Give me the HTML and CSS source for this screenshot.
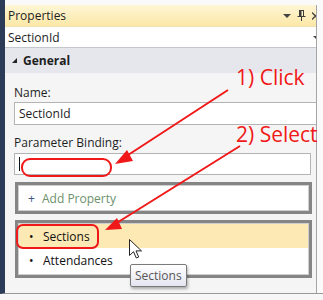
FILE: index.html
```html
<!DOCTYPE html>
<html lang="en">
<head>
  <meta charset="UTF-8" />
  <title>Properties</title>
  <link rel="stylesheet" href="styles.css">
</head>
<body>
  <div class="shot">
    <div class="panel">
      <div class="title">
        <span>Properties</span>
        <span class="title-icons">
          <span class="drop"></span>
          <svg class="pin" width="9" height="11" viewBox="0 0 9 11"><path d="M2 0.5h5M2.5 0.5v6M6.5 0.5v6M0.5 6.5h8M4.5 6.5v4.5" stroke="#3c3c3c" fill="none"/><rect x="2.5" y="1" width="2" height="5.5" fill="#3c3c3c"/></svg>
          <svg class="close" width="4" height="8" viewBox="0 0 4 8"><path d="M0 0.5l7 7M0 7.5l7-7" stroke="#444" stroke-width="1.3"/></svg>
        </span>
      </div>
      <div class="combo">SectionId<span class="combo-arrow"></span></div>
      <div class="group"><span class="tri"></span>General</div>
      <div class="body">
        <div class="label">Name:</div>
        <div class="field wide">SectionId</div>
        <div class="label">Parameter Binding:</div>
        <div class="field"><span class="caret"></span></div>
        <div class="box add"><span class="plus">+</span>Add Property</div>
        <div class="box list">
          <div class="item active"><span class="dot">•</span>Sections</div>
          <div class="item"><span class="dot">•</span>Attendances</div>
        </div>
      </div>
    </div>
    <div class="tip">Sections</div>
    <svg class="pointer" width="14" height="21" viewBox="0 0 14 21"><path d="M0.5 0.5v16l4-3.8 2.8 6.3 2.4-1-2.7-6.1h5.5z" fill="#fff" stroke="#222" stroke-linejoin="round"/></svg>
    <svg class="notes" width="323" height="300" viewBox="0 0 323 300">
      <g fill="none" stroke="#f01818" stroke-width="2">
        <rect x="22" y="159" width="89" height="17" rx="8"/>
        <rect x="17" y="225" width="81" height="23" rx="6"/>
        <line x1="228" y1="90" x2="125" y2="157"/>
        <line x1="240" y1="146" x2="115" y2="224"/>
      </g>
      <g fill="#f01818">
        <polygon points="115,164 127,150 133,161"/>
        <polygon points="105,230 117,218 122,229"/>
      </g>
      <text x="236" y="85" class="note">1) Click</text>
      <text x="236" y="142" class="note">2) Select</text>
    </svg>
  </div>
</body>
</html>
```

FILE: styles.css
```css
* { margin: 0; padding: 0; box-sizing: border-box; }
body {
  font-family: 'Open Sans', 'Noto Sans', sans-serif;
  font-size: 12px;
  color: #1e1e1e;
  background: #f7f7f7;
  width: 323px;
  height: 300px;
  overflow: hidden;
}

.shot {
  position: relative;
  width: 323px;
  height: 294px;
  padding-top: 5px;
  border-left: 5px solid #2c3b58;
  border-bottom: 1px solid #9a9a9a;
  background: #fafafa;
}

/* Properties panel */
.panel {
  width: 312px;
  height: 288px;
  overflow: hidden;
  border-right: 1px solid #a5a5a5;
  display: flex;
  flex-direction: column;
}
.title {
  height: 22px;
  display: flex;
  align-items: center;
  justify-content: space-between;
  padding-left: 3px;
  background: linear-gradient(#fef6d6, #fce8a6);
  border-bottom: 1px solid #f0e2b0;
}
.title-icons { display: flex; align-items: center; gap: 6px; }
.drop {
  width: 0; height: 0;
  border-left: 4px solid transparent;
  border-right: 4px solid transparent;
  border-top: 4px solid #444;
}
.combo {
  height: 21px;
  display: flex;
  align-items: center;
  justify-content: space-between;
  padding-left: 3px;
  background: #fff;
  border-bottom: 1px solid #c4c7cf;
}
.combo-arrow {
  width: 0; height: 0;
  border-left: 3px solid transparent;
  border-right: 3px solid transparent;
  border-top: 3px solid #444;
  margin-right: -3px;
}
.group {
  height: 25px;
  display: flex;
  align-items: center;
  gap: 6px;
  padding-left: 7px;
  font-weight: 700;
  background: #e5e7ed;
}
.tri {
  width: 0; height: 0;
  border-left: 5px solid transparent;
  border-bottom: 5px solid #222;
}

.body {
  flex: 1;
  background: #f5f5f5;
  padding: 12px 0 0 9px;
}
.label { line-height: 16px; }
.field {
  width: 297px;
  height: 22px;
  margin: 2px 0 10px;
  padding-left: 4px;
  display: flex;
  align-items: center;
  background: #fff;
  border: 1px solid #b4b4b4;
}
.field.wide { width: 310px; height: 23px; margin: 1px 0 10px; }
.caret { width: 1px; height: 14px; background: #111; }

.box {
  width: 297px;
  margin-left: 1px;
  background: #fff;
  border: 3px solid #858585;
  box-shadow: inset 0 0 0 1px #cfcfcf;
}
.add {
  height: 32px;
  margin-top: -3px;
  display: flex;
  align-items: center;
  padding-left: 10px;
  color: #6c916c;
}
.plus { color: #3d5480; width: 14px; }
.list { margin-top: 6px; padding: 1px 1px 3px; }
.item {
  height: 24px;
  display: flex;
  align-items: center;
  padding-left: 10px;
  color: #111;
}
.item.active { background: #fde9b4; }
.dot { width: 14px; }

/* overlays */
.tip {
  position: absolute;
  left: 125px;
  top: 264px;
  height: 23px;
  padding: 0 4px;
  display: flex;
  align-items: center;
  color: #575757;
  background: linear-gradient(#ffffff, #e4e5f0);
  border: 1px solid #7a7a7a;
  border-radius: 2px;
  box-shadow: 1px 2px 3px rgba(0,0,0,0.3);
}
.pointer { position: absolute; left: 124px; top: 239px; }
.notes { position: absolute; left: -5px; top: 0; }
.note {
  font-family: 'Open Sans', 'Noto Sans', sans-serif;
  font-size: 21px;
  fill: #f01818;
}
```
